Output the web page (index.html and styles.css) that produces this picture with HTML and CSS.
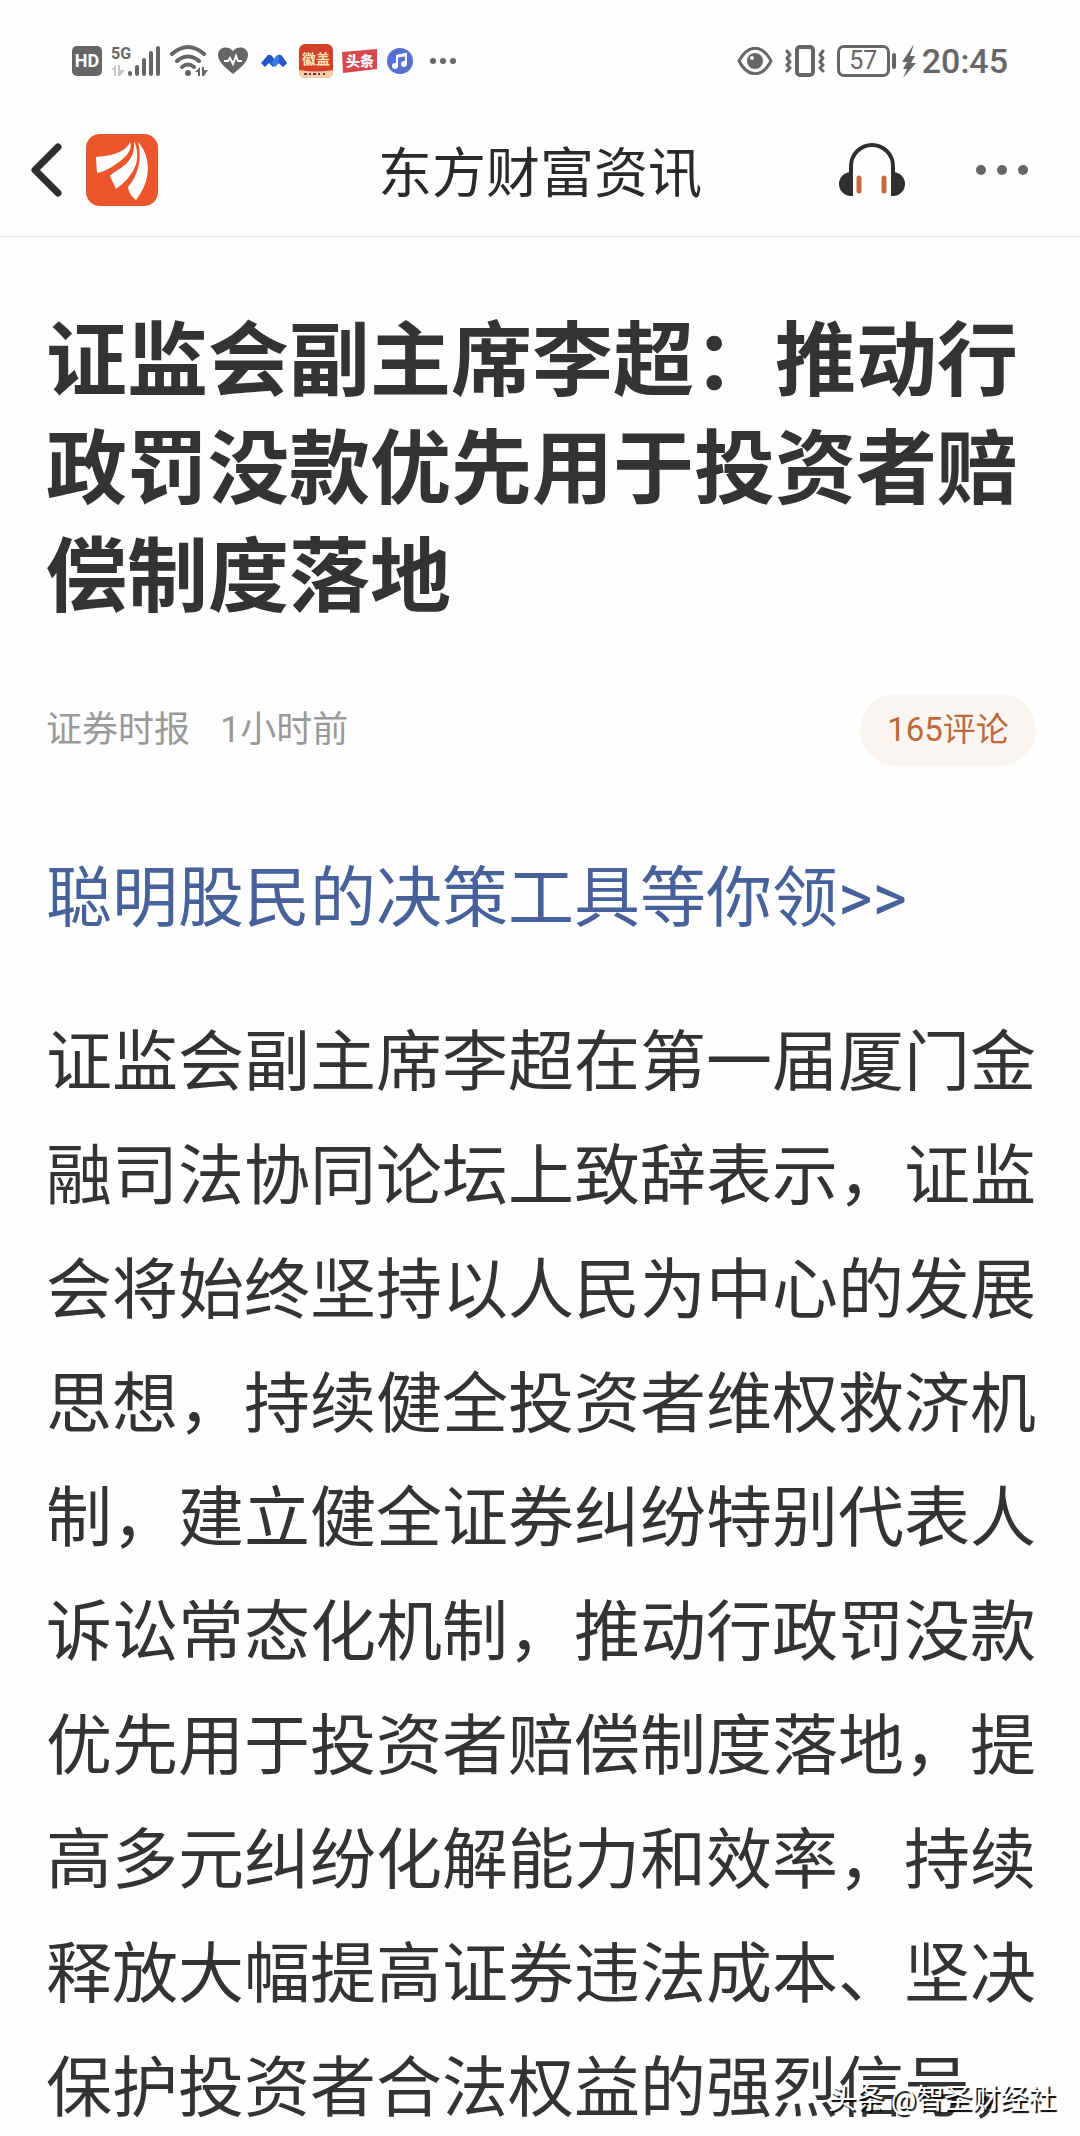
FILE: index.html
```html
<!DOCTYPE html>
<html lang="zh-CN">
<head>
<meta charset="utf-8">
<meta name="viewport" content="width=device-width, initial-scale=1">
<title>东方财富资讯</title>
<link rel="stylesheet" href="styles.css">
</head>
<body>
<div class="screen">
  <div class="status">
    <div class="status-group">
      <span class="hd">HD</span>
      <svg class="signal" width="50" height="34" viewBox="0 0 50 34" aria-hidden="true">
        <text class="net" x="0" y="15">5G</text>
        <g stroke="#666" stroke-width="4" stroke-linecap="round"><path d="M19 29v1M26 23v7M33 16v14M40 9v21M47 4v26"/></g>
        <path d="M0 26l5-5v11H3v-6zM7 21h2v5l5 0-5 6H7z" fill="#c4c4c4"/>
      </svg>
      <svg class="wifi" width="38" height="34" viewBox="0 0 38 34" aria-hidden="true">
        <g fill="none" stroke="#666" stroke-width="4" stroke-linecap="round"><path d="M2 10Q18-4 34 10M7 17q11-9 22 0M12 23q6-5 12 0"/></g>
        <circle cx="18" cy="29" r="3" fill="#666"/>
        <path d="M25 28l5-5v9h-2v-4zM32 23h2v3h4l-4 6h-2z" fill="#666"/>
      </svg>
      <svg class="heart" width="32" height="30" viewBox="0 0 32 30" aria-hidden="true">
        <path d="M16 28C9 22 1 16 1 9 1 1 11-1 16 5 21-1 31 1 31 9c0 7-8 13-15 19z" fill="#666"/>
        <path d="M7 15h4l2-3 3 6 3-8 2 5h4" fill="none" stroke="#fff" stroke-width="2"/>
      </svg>
      <svg class="peaks" width="28" height="14" viewBox="0 0 28 14" aria-hidden="true">
        <path d="M1 9L8 1q2-1 4 1l5 7-4 4-4-4-4 4z" fill="#2256c4"/>
        <path d="M11 9l6-8q2-1 4 0l6 8-4 4-4-4-4 4z" fill="#397be8"/>
        <path d="M19 1h2l6 8-4 4-4-4z" fill="#2458cb"/>
      </svg>
      <svg class="huitu" width="34" height="34" viewBox="0 0 34 34" aria-hidden="true">
        <rect width="34" height="34" rx="6" fill="#d2402c"/>
        <path d="M0 26q17 3 34 0v2q0 6-6 6H6q-6 0-6-6z" fill="#f3cda9"/>
        <text class="tile-text" x="3" y="20">徽盖</text>
        <path d="M5 30h3m2 0h2m2 0h3m2 0h2m3 0h2" stroke="#76372a" stroke-width="2"/>
      </svg>
      <svg class="toutiao" width="36" height="24" viewBox="0 0 36 24" aria-hidden="true">
        <path d="M0 3L35 0v20L1 24z" fill="#d8474b"/>
        <text class="toutiao-text" x="4" y="17">头条</text>
      </svg>
      <svg class="music" width="26" height="26" viewBox="0 0 26 26" aria-hidden="true">
        <circle cx="13" cy="13" r="13" fill="#5670cf"/>
        <path d="M10 18V8l9-2v10" fill="none" stroke="#fff" stroke-width="2"/>
        <path d="M9 7l11-2v3L9 10z" fill="#fff"/>
        <circle cx="8" cy="18" r="3" fill="#fff"/><circle cx="17" cy="16" r="3" fill="#fff"/>
      </svg>
      <svg class="dots" width="26" height="6" viewBox="0 0 26 6" fill="#666" aria-hidden="true"><circle cx="3" cy="3" r="3"/><circle cx="13" cy="3" r="3"/><circle cx="23" cy="3" r="3"/></svg>
    </div>
    <div class="status-group status-right">
      <svg class="eye" width="36" height="28" viewBox="0 0 36 28" aria-hidden="true">
        <path d="M2 14C11-3 25-3 34 14 25 31 11 31 2 14z" fill="none" stroke="#666" stroke-width="3"/>
        <circle cx="18" cy="14" r="8" fill="#666"/><circle cx="15" cy="11" r="2" fill="#fff"/>
      </svg>
      <svg class="vibrate" width="40" height="32" viewBox="0 0 40 32" fill="none" stroke="#666" stroke-width="3" stroke-linecap="round" stroke-linejoin="round" aria-hidden="true">
        <rect x="12" y="2" width="16" height="28" rx="3" stroke-width="4"/>
        <path d="M2 6l3 4-3 3 3 4-3 3 3 3-3 3M38 6l-3 4 3 3-3 4 3 3-3 3 3 3"/>
      </svg>
      <span class="battery">57</span>
      <div class="power">
        <svg class="bolt" width="14" height="34" viewBox="0 0 14 34" fill="#666" aria-hidden="true"><path d="M12 0L0 18h5L1 25h4L1 34l13-15H9l4-7H8z"/></svg>
        <time class="clock">20:45</time>
      </div>
    </div>
  </div>

  <header class="bar">
    <div class="bar-left">
      <button class="icon-button" type="button" aria-label="返回">
        <svg width="34" height="54" viewBox="0 0 34 54" fill="none" stroke="#2f2f2f" stroke-width="7" stroke-linecap="round" stroke-linejoin="round" aria-hidden="true"><path d="M30 4L7 27l23 23"/></svg>
      </button>
      <a class="logo" href="#" aria-label="东方财富">
        <svg width="72" height="72" viewBox="0 0 72 72" aria-hidden="true">
          <rect width="72" height="72" rx="14" fill="#ea552b"/>
          <path d="M44 8c3 7-3 14-11 20-7 5-13 9-22 11l-1-16c11-1 29-3 34-15z" fill="#fff"/>
          <path d="M48 7c5 10 4 22-1 30-5 8-10 13-17 18l-6-13c6-7 26-11 24-35z" fill="#fff"/>
          <path d="M52 8c13 14 14 38-2 58-4-3-7-7-8-13 8-9 15-25 10-45z" fill="#fff"/>
        </svg>
      </a>
    </div>
    <div class="bar-title">东方财富资讯</div>
    <div class="bar-right">
      <button class="icon-button" type="button" aria-label="听资讯">
        <svg width="66" height="54" viewBox="0 0 66 54" aria-hidden="true">
          <path d="M12 32V23a21 21 0 0 1 42 0v9" fill="none" stroke="#2f2f2f" stroke-width="4"/>
          <path d="M14 29v24h-2a12 12 0 0 1 0-24zM52 29v24h2a12 12 0 0 0 0-24z" fill="#2f2f2f"/>
          <path d="M20 35v13M45 35v13" stroke="#c56a3e" stroke-width="5" stroke-linecap="round"/>
        </svg>
      </button>
      <button class="icon-button" type="button" aria-label="更多">
        <svg width="52" height="10" viewBox="0 0 52 10" fill="#666" aria-hidden="true"><circle cx="5" cy="5" r="5"/><circle cx="26" cy="5" r="5"/><circle cx="47" cy="5" r="5"/></svg>
      </button>
    </div>
  </header>

  <main class="article">
    <h1 class="headline">证监会副主席李超：推动行政罚没款优先用于投资者赔偿制度落地</h1>
    <div class="meta">
      <span>证券时报</span>
      <time>1小时前</time>
      <button class="comments" type="button">165评论</button>
    </div>
    <a class="promo" href="#">聪明股民的决策工具等你领&gt;&gt;</a>
    <p class="text">证监会副主席李超在第一届厦门金融司法协同论坛上致辞表示，证监会将始终坚持以人民为中心的发展思想，持续健全投资者维权救济机制，建立健全证券纠纷特别代表人诉讼常态化机制，推动行政罚没款优先用于投资者赔偿制度落地，提高多元纠纷化解能力和效率，持续释放大幅提高证券违法成本、坚决保护投资者合法权益的强烈信号，</p>
  </main>
  <div class="watermark">头条 @智圣财经社</div>
</div>
</body>
</html>
```
FILE: styles.css
```css
* { box-sizing: border-box; }

body {
  margin: 0;
  background: #fefefe;
  color: #333;
  font-family: Roboto, "Noto Sans CJK SC", sans-serif;
}

svg { display: block; flex: none; }

button {
  border: 0;
  padding: 0;
  background: none;
  font: inherit;
  cursor: pointer;
}

a { text-decoration: none; }

.screen {
  position: relative;
  display: flex;
  flex-direction: column;
  height: 100vh;
  overflow: hidden;
}

/* Status bar */
.status {
  flex: none;
  display: flex;
  justify-content: space-between;
  align-items: center;
  height: 122px;
  padding: 0 72px;
  color: #666;
}

.status-group {
  display: flex;
  align-items: center;
  gap: 9px;
}

.status-right { gap: 12px; }

.power {
  display: flex;
  align-items: center;
  gap: 6px;
}

.hd {
  width: 30px;
  height: 30px;
  border-radius: 5px;
  background: #666;
  color: #fff;
  font: 700 18px/30px Roboto, sans-serif;
  text-align: center;
}

.net { font: 700 16px Roboto, sans-serif; fill: #666; }
.tile-text { font: 700 14px "Noto Sans CJK SC", sans-serif; fill: #fbe3b4; }
.toutiao-text { font: 900 14px "Noto Sans CJK SC", sans-serif; fill: #fff; }
.peaks { margin: 0 2px; }
.dots { margin-left: 8px; }

.battery {
  position: relative;
  width: 53px;
  height: 32px;
  border: 3px solid #666;
  border-radius: 7px;
  font-size: 25px;
  line-height: 26px;
  text-align: center;
}

.battery::after {
  content: "";
  position: absolute;
  top: 5px;
  right: -9px;
  width: 4px;
  height: 16px;
  border-radius: 2px;
  background: #666;
}

.clock {
  font-size: 34px;
  font-weight: 500;
  line-height: 40px;
}

/* Title bar */
.bar {
  flex: none;
  display: grid;
  grid-template-columns: 1fr auto 1fr;
  align-items: center;
  height: 115px;
  padding: 0 28px 18px;
  border-bottom: 1px solid #e6e6e6;
}

.bar-left,
.bar-right {
  display: flex;
  align-items: center;
}

.bar-left { gap: 24px; }

.bar-right {
  justify-content: flex-end;
  gap: 71px;
  padding-right: 24px;
}

.bar-title {
  color: #2a2a2a;
  font-family: "Noto Sans CJK SC", sans-serif;
  font-size: 54px;
  line-height: 80px;
}

/* Article */
.article {
  flex: 1;
  min-height: 0;
  padding: 71px 44px 0 46px;
}

.headline {
  margin: 0;
  font-size: 81px;
  font-weight: 700;
  line-height: 108px;
}

.meta {
  display: flex;
  align-items: center;
  gap: 30px;
  margin: 62px 0 76px;
  color: #999;
  font-size: 36px;
  line-height: 72px;
}

.comments {
  width: 176px;
  height: 72px;
  margin-left: auto;
  border-radius: 36px;
  background: #fbf5f1;
  color: #bd6a3a;
  font-size: 33px;
}

.promo,
.text {
  display: block;
  margin: 0;
  font-size: 66px;
  line-height: 114px;
}

.promo {
  margin-bottom: 50px;
  color: #47619a;
}

.watermark {
  position: absolute;
  right: 24px;
  bottom: 16px;
  color: #fff;
  font-size: 28px;
  line-height: 40px;
  text-shadow: 2px 2px 1px #000;
}
```
